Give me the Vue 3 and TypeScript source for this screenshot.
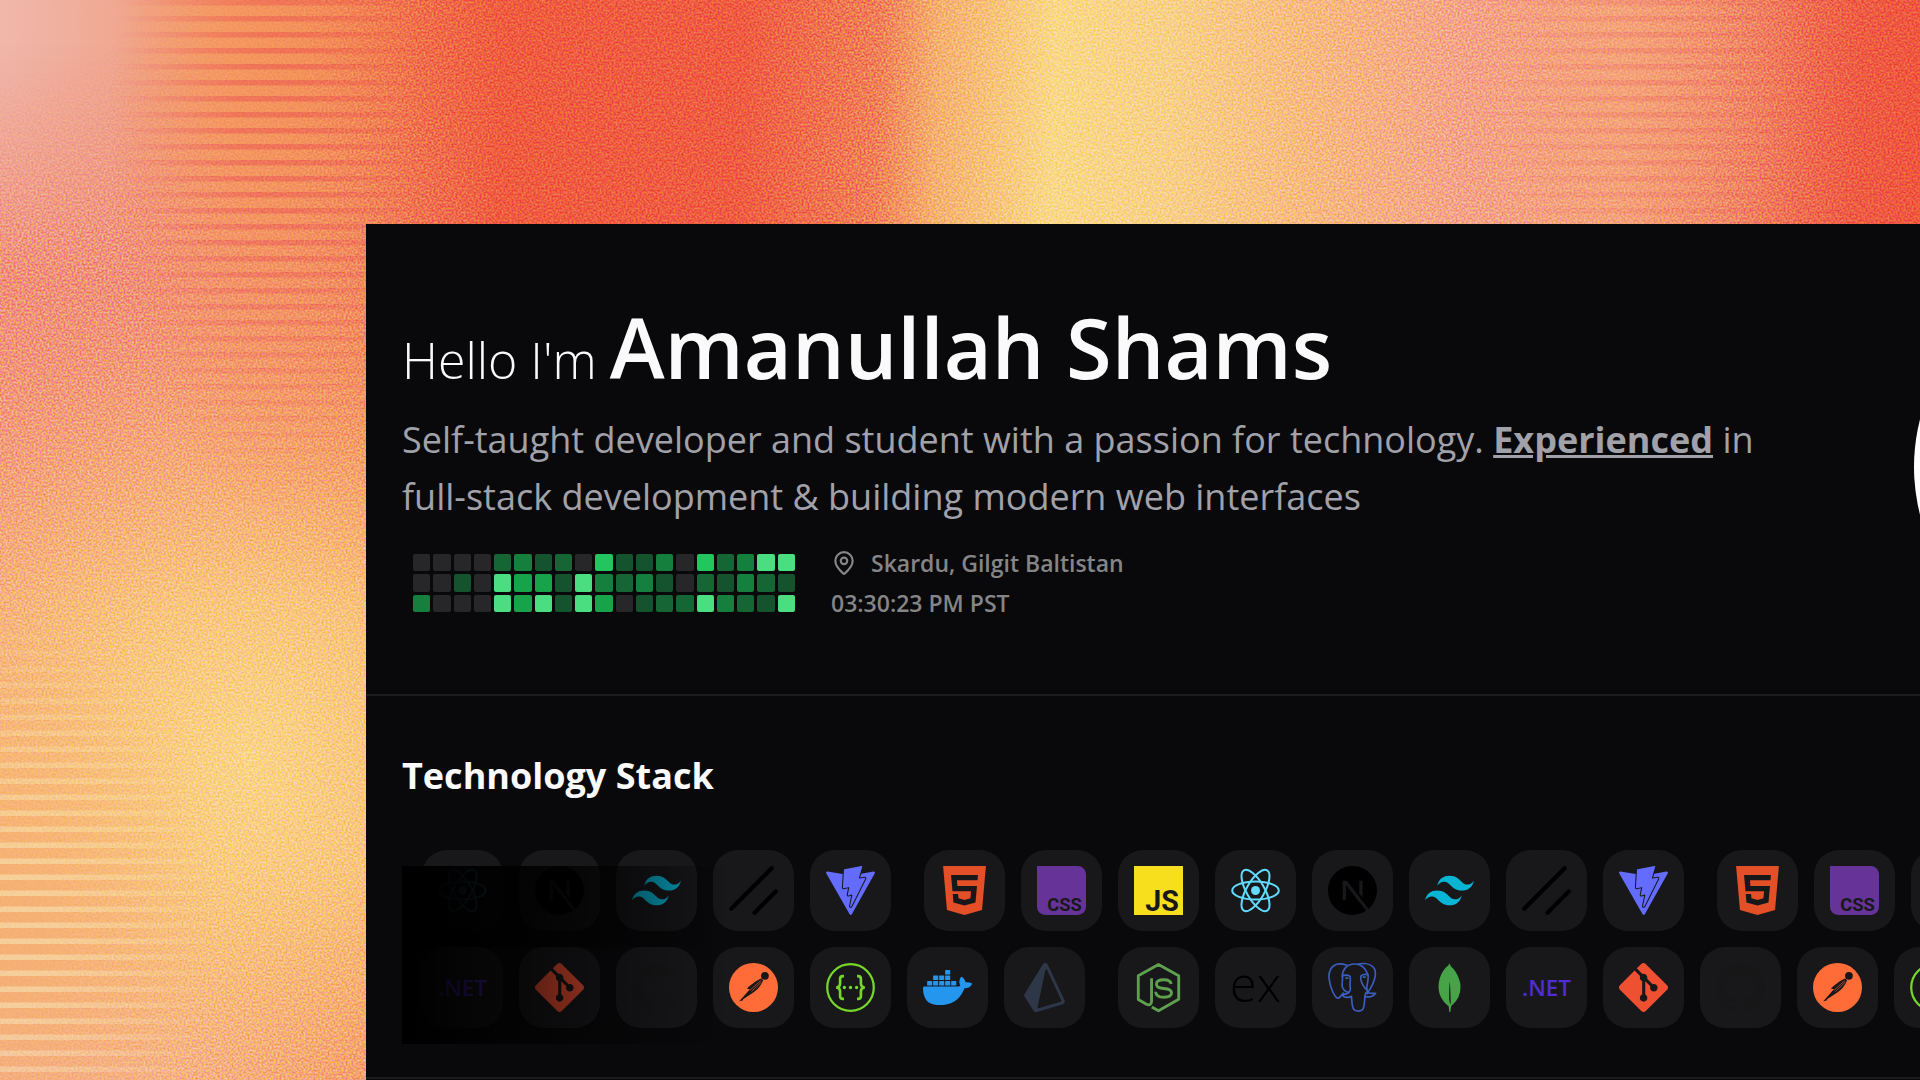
<script setup lang="ts">
type Level = 0 | 1 | 2 | 3 | 4 | 5 | 6

// One string per weekday, one digit per week
const activity: string[] = [
  '0000231205113052366',
  '0010644163231021321',
  '3000646164012263216',
]

const cells: Level[] = activity.flatMap((row) => [...row].map((d) => Number(d) as Level))

// Inner markup of each brand icon, drawn on a 24 by 24 grid
const icons: Record<string, string> = {
  html: `<path fill="#e34f26" d="M1.5 0h21l-1.91 21.563L11.977 24l-8.564-2.438L1.5 0zm7.031 9.75l-.232-2.718 10.059.003.23-2.622L5.412 4.41l.698 8.01h9.126l-.326 3.426-2.91.804-2.955-.81-.188-2.11H6.248l.33 4.171L12 19.351l5.379-1.443.744-8.157H8.531z"/>`,
  css: `<path fill="#663399" d="M0 0h20a4 4 0 0 1 4 4v16a4 4 0 0 1-4 4H4a4 4 0 0 1-4-4z"/>
    <text x="22" y="22" text-anchor="end" fill="#18181b" font-family="Roboto, sans-serif" font-weight="700" font-size="9">CSS</text>`,
  js: `<path fill="#f7df1e" d="M0 0h24v24H0z"/>
    <text x="22" y="22" text-anchor="end" fill="#18181b" font-family="Roboto, sans-serif" font-weight="700" font-size="14">JS</text>`,
  react: `<circle cx="12" cy="12" r="2.2" fill="#61dafb"/>
    <g fill="none" stroke="#61dafb" stroke-width="1">
      <ellipse cx="12" cy="12" rx="11.4" ry="4.4"/>
      <ellipse cx="12" cy="12" rx="11.4" ry="4.4" transform="rotate(60 12 12)"/>
      <ellipse cx="12" cy="12" rx="11.4" ry="4.4" transform="rotate(120 12 12)"/>
    </g>`,
  next: `<path fill="#000" d="M18.665 21.978C16.758 23.255 14.465 24 12 24 5.377 24 0 18.623 0 12S5.377 0 12 0s12 5.377 12 12c0 3.583-1.574 6.801-4.067 9.001L9.219 7.2H7.2v9.596h1.615V9.251l9.85 12.727Zm-3.332-8.533 1.6 2.061V7.2h-1.6v6.245Z"/>`,
  tailwind: `<path fill="#06b6d4" d="M12.001,4.8c-3.2,0-5.2,1.6-6,4.8c1.2-1.6,2.6-2.2,4.2-1.8c0.913,0.228,1.565,0.89,2.288,1.624C13.666,10.618,15.027,12,18.001,12c3.2,0,5.2-1.6,6-4.8c-1.2,1.6-2.6,2.2-4.2,1.8c-0.913-0.228-1.565-0.89-2.288-1.624C16.337,6.182,14.976,4.8,12.001,4.8z M6.001,12c-3.2,0-5.2,1.6-6,4.8c1.2-1.6,2.6-2.2,4.2-1.8c0.913,0.228,1.565,0.89,2.288,1.624c1.177,1.194,2.538,2.576,5.512,2.576c3.2,0,5.2-1.6,6-4.8c-1.2,1.6-2.6,2.2-4.2,1.8c-0.913-0.228-1.565-0.89-2.288-1.624C10.337,13.382,8.976,12,6.001,12z"/>`,
  shadcn: `<path fill="none" stroke="#000" stroke-width="2.1" stroke-linecap="round" d="M1.1 20.9 20.9 1.1M12.5 22.9 22.9 12.5"/>`,
  vite: `<path fill="#646cff" d="m8.286 10.578.512-8.657a.306.306 0 0 1 .247-.282L17.377.006a.306.306 0 0 1 .353.385l-1.558 5.403a.306.306 0 0 0 .352.385l2.388-.46a.306.306 0 0 1 .332.438l-6.79 13.55-.123.19a.294.294 0 0 1-.252.14c-.177 0-.35-.152-.305-.369l1.095-5.301a.306.306 0 0 0-.388-.355l-1.433.435a.306.306 0 0 1-.389-.354l.69-3.375a.306.306 0 0 0-.37-.36l-2.32.536a.306.306 0 0 1-.374-.316zm14.976-7.926L17.284 3.74l-.544 1.887 2.077-.4a.8.8 0 0 1 .84.369.8.8 0 0 1 .034.783L12.9 19.93l-.013.025-.015.023-.122.19a.801.801 0 0 1-.672.37.826.826 0 0 1-.634-.302.8.8 0 0 1-.16-.67l1.029-4.981-1.12.34a.81.81 0 0 1-.86-.262.802.802 0 0 1-.165-.67l.63-3.08-2.027.468a.808.808 0 0 1-.768-.233.81.81 0 0 1-.217-.6l.389-6.57-7.44-1.33a.612.612 0 0 0-.64.906L11.58 23.691a.612.612 0 0 0 1.066-.004l11.26-20.135a.612.612 0 0 0-.644-.9z"/>`,
  dotnet: `<text x="12" y="16" text-anchor="middle" fill="#512bd4" font-family="'Open Sans', sans-serif" font-weight="600" font-size="11">.NET</text>`,
  git: `<path fill="#f05032" d="M23.546 10.93L13.067.452c-.604-.603-1.582-.603-2.188 0L8.708 2.627l2.76 2.76c.645-.215 1.379-.07 1.889.441.516.515.658 1.258.438 1.9l2.658 2.66c.645-.223 1.387-.078 1.9.435.721.72.721 1.884 0 2.604-.719.719-1.881.719-2.6 0-.539-.541-.674-1.337-.404-1.996L12.86 8.955v6.525c.176.086.342.203.488.348.713.721.713 1.883 0 2.6-.719.721-1.889.721-2.609 0-.719-.719-.719-1.879 0-2.598.182-.18.387-.316.605-.406V8.835c-.217-.091-.424-.222-.6-.401-.545-.545-.676-1.342-.396-2.009L7.636 3.7.45 10.881c-.6.605-.6 1.584 0 2.189l10.48 10.477c.604.604 1.582.604 2.186 0l10.43-10.43c.605-.603.605-1.582 0-2.187"/>`,
  github: `<path fill="#181717" d="M12 .297c-6.63 0-12 5.373-12 12 0 5.303 3.438 9.8 8.205 11.385.6.113.82-.258.82-.577 0-.285-.01-1.04-.015-2.04-3.338.724-4.042-1.61-4.042-1.61C4.422 18.07 3.633 17.7 3.633 17.7c-1.087-.744.084-.729.084-.729 1.205.084 1.838 1.236 1.838 1.236 1.07 1.835 2.809 1.305 3.495.998.108-.776.417-1.305.76-1.605-2.665-.3-5.466-1.332-5.466-5.93 0-1.31.465-2.38 1.235-3.22-.135-.303-.54-1.523.105-3.176 0 0 1.005-.322 3.3 1.23.96-.267 1.98-.399 3-.405 1.02.006 2.04.138 3 .405 2.28-1.552 3.285-1.23 3.285-1.23.645 1.653.24 2.873.12 3.176.765.84 1.23 1.91 1.23 3.22 0 4.61-2.805 5.625-5.475 5.92.42.36.81 1.096.81 2.22 0 1.606-.015 2.896-.015 3.286 0 .315.21.69.825.57C20.565 22.092 24 17.592 24 12.297c0-6.627-5.373-12-12-12"/>`,
  postman: `<circle cx="12" cy="12" r="12" fill="#ff6c37"/>
    <circle cx="17.6" cy="6.3" r="1.9" fill="#18181b"/>
    <path fill="#18181b" d="M15.9 7.6c-2.2.6-5 3-7.2 4.9l1.5.3-1.9 2.3-3.3 3.6 1.7-.3.2-.7 5-3.2c2.3-1.6 4-3.7 4.8-6z"/>
    <path fill="none" stroke="#ff6c37" stroke-width=".3" d="M15.6 8.600 10.2 13.4M15.9 9.3 11 14"/>`,
  swagger: `<circle cx="12" cy="12" r="11.4" fill="none" stroke="#77d728" stroke-width="1.1"/>
    <path fill="none" stroke="#77d728" stroke-width="1.3" d="M8.800 6.4H8.3c-1 0-1.4.5-1.4 1.4v2.4c0 1.1-.5 1.7-1.9 1.8c1.4.1 1.9.7 1.9 1.8v2.4c0 .9.4 1.4 1.4 1.4h.5M15.2 6.4h.5c1 0 1.4.5 1.4 1.4v2.4c0 1.1.5 1.7 1.9 1.8c-1.4.1-1.9.7-1.9 1.8v2.4c0 .9-.4 1.4-1.4 1.4h-.5"/>
    <g fill="#77d728"><circle cx="9" cy="12" r=".8"/><circle cx="12" cy="12" r=".8"/><circle cx="15" cy="12" r=".8"/></g>`,
  docker: `<path fill="#2496ed" d="M13.983 11.078h2.119a.186.186 0 00.186-.185V9.006a.186.186 0 00-.186-.186h-2.119a.185.185 0 00-.185.185v1.888c0 .102.083.185.185.185m-2.954-5.430h2.118a.186.186 0 00.186-.186V3.574a.186.186 0 00-.186-.185h-2.118a.185.185 0 00-.185.185v1.888c0 .102.082.185.185.185m0 2.716h2.118a.187.187 0 00.186-.186V6.290a.186.186 0 00-.186-.185h-2.118a.185.185 0 00-.185.185v1.887c0 .102.082.185.185.186m-2.930 0h2.120a.186.186 0 00.184-.186V6.290a.185.185 0 00-.185-.185H8.100a.185.185 0 00-.185.185v1.887c0 .102.083.185.185.186m-2.964 0h2.119a.186.186 0 00.185-.186V6.290a.185.185 0 00-.185-.185H5.136a.186.186 0 00-.186.185v1.887c0 .102.084.185.186.186m5.893 2.715h2.118a.186.186 0 00.186-.185V9.006a.186.186 0 00-.186-.186h-2.118a.185.185 0 00-.185.185v1.888c0 .102.082.185.185.185m-2.930 0h2.120a.185.185 0 00.184-.185V9.006a.185.185 0 00-.184-.186h-2.120a.185.185 0 00-.184.185v1.888c0 .102.083.185.185.185m-2.964 0h2.119a.185.185 0 00.185-.185V9.006a.185.185 0 00-.184-.186h-2.120a.186.186 0 00-.186.186v1.887c0 .102.084.185.186.185m-2.920 0h2.120a.185.185 0 00.184-.185V9.006a.185.185 0 00-.184-.186h-2.120a.185.185 0 00-.184.185v1.888c0 .102.082.185.185.185M23.763 9.890c-.065-.051-.672-.510-1.954-.510-.338.001-.676.030-1.010.087-.248-1.700-1.653-2.530-1.716-2.566l-.344-.199-.226.327c-.284.438-.490.922-.612 1.430-.230.970-.090 1.882.403 2.661-.595.332-1.550.413-1.744.420H.751a.751.751 0 00-.750.748 11.376 11.376 0 00.692 4.062c.545 1.428 1.355 2.480 2.410 3.124 1.180.723 3.100 1.137 5.275 1.137.983.003 1.963-.086 2.930-.266a12.248 12.248 0 003.823-1.389c.980-.567 1.860-1.288 2.610-2.136 1.252-1.418 1.998-2.997 2.553-4.400h.221c1.372 0 2.215-.549 2.680-1.009.309-.293.550-.650.707-1.046l.098-.288Z"/>`,
  prisma: `<path fill="#2d3748" d="M21.8068 18.2848L13.5528.7565c-.207-.4382-.639-.7273-1.1286-.7541-.5023-.0293-.9523.213-1.2062.6253L2.266 15.1271c-.2773.4518-.2718 1.0091.0158 1.4555l4.3759 6.7786c.2608.4046.7127.6388 1.1823.6388.1332 0 .267-.0188.3987-.0577l12.7019-3.7568c.3891-.1151.7072-.3904.8737-.7553s.1633-.7828-.0075-1.1454zm-1.8481.7519L9.1814 22.2242c-.3292.0975-.6448-.1873-.5756-.5194l3.8501-18.4386c.072-.3448.5486-.3996.699-.0803l7.1288 15.138c.1344.2856-.019.6224-.325.7128z"/>`,
  node: `<g fill="none" stroke="#5fa04e" stroke-width="1.4" stroke-linejoin="round">
      <path d="M8.600 7.500v11.2c0 1.6-1.2 2.2-2.5 1.5L2.1 17.9V6.2L12 .7l9.9 5.5v11.6L12 23.4l-3.3-1.9"/>
      <path d="M18.2 10.3c-.2-1.5-1.4-2.1-3.6-2.1s-3.6.7-3.6 2.1c0 1.7 1.4 1.9 3.7 2.2c2.4.3 3.7.6 3.7 2.1s-1.3 2.2-3.8 2.2c-2.7 0-3.9-.9-4-2.7"/>
    </g>`,
  express: `<text x="12" y="19" text-anchor="middle" fill="#000" font-family="'Open Sans', sans-serif" font-weight="300" font-size="24">ex</text>`,
  postgres: `<g fill="none" stroke="#3b5fc0" stroke-width=".8" stroke-linejoin="round" stroke-linecap="round">
      <path d="M9 1C6.5.2 4.5.2 3 1.2C.8 2.7.2 5 .6 8c.5 3.5 1.6 6.6 3.2 8.6c.7.8 1.4.8 2 .1l1.7-2"/>
      <path d="M7 6.5C7 3.5 9 .5 13 .5c3.5 0 5.5 2.4 6.5 5c.6 1.8-.3 4.5-.5 6.3c-.1 1.3.7 2 .3 3.2"/>
      <path d="M14.5.6C18-.1 21.5.5 22.8 3c1.2 2.6-.4 7.5-3.3 11.3"/>
      <path d="M7 6.5c1-.8 2.8-.7 3.7-.1c.7 2-.3 3.6.2 5.5c.2 1.3 0 2-.7 2.5c-1.7-.1-3.3-1.7-3.3-3.4c0-1.7.4-2.8.1-4.5z"/>
      <path d="M10.2 14.4c-.9 1-2.4.7-3.2 1.4c1 1.4 3.3 1.2 4.5.5c.2 2.5.2 4.3.8 5.9c.6 1.5 3.3 1.8 4.6.6c1.1-1 .9-4.4 1.3-7.3c.3-1 .7-1.5 1.3-1.1c1.3.6 2.5.6 3.8.4c-.9 1.5-3.2 2.2-4.9 1.6"/>
      <path d="M19.3 5.8c-1-.5-2.6-.2-3.2.7c-.4 2.2 1 4.6 2.6 6.5M8.800 7.4h.9M17.3 6.9h.9"/>
    </g>`,
  mongo: `<path fill="#47a248" d="M17.193 9.555c-1.264-5.580-4.252-7.414-4.573-8.115-.280-.394-.530-.954-.735-1.440-.036.495-.055.685-.523 1.184-.723.566-4.438 3.682-4.740 10.020-.282 5.912 4.270 9.435 4.888 9.884l.070.050A73.490 73.490 0 0111.910 24h.481c.114-1.032.284-2.056.510-3.070.417-.296.604-.463.850-.693a11.342 11.342 0 003.639-8.464c.010-.814-.103-1.662-.197-2.218zm-5.336 8.195s0-8.291.275-8.290c.213 0 .490 10.695.490 10.695-.381-.045-.765-1.760-.765-2.405z"/>`,
}

const frontend = ['html', 'css', 'js', 'react', 'next', 'tailwind', 'shadcn', 'vite']
const backend = ['node', 'express', 'postgres', 'mongo', 'dotnet', 'git', 'github', 'postman', 'swagger', 'docker', 'prisma']

const rails: string[][][] = [
  [frontend.slice(3), frontend, frontend],
  [backend.slice(4), backend],
]
</script>

<template>
  <div class="page">
    <div class="backdrop" aria-hidden="true">
      <div class="glow-side"></div>
      <div class="glow-sun"></div>
      <svg class="grain" width="100%" height="100%">
        <filter id="grain-filter" x="0" y="0" width="100%" height="100%" color-interpolation-filters="sRGB">
          <feTurbulence type="fractalNoise" baseFrequency="0.5" numOctaves="2" seed="4" />
          <feColorMatrix type="matrix" values="2 0 0 0 -0.5  0 2.6 0 0 -0.8  0 0 2.6 0 -0.8  0 0 0 0 1" />
        </filter>
        <rect width="100%" height="100%" filter="url(#grain-filter)" />
      </svg>
      <div class="stripes stripes-top"></div>
      <div class="stripes stripes-right"></div>
      <div class="stripes stripes-bottom"></div>
    </div>

    <main class="panel">
      <header class="intro">
        <div class="about">
          <h1 class="title"><span class="hello">Hello I'm </span><span class="name">Amanullah Shams</span></h1>
          <p class="lead">
            Self-taught developer and student with a passion for technology.
            <a class="link" href="#experience">Experienced</a> in full-stack development &amp; building modern web interfaces
          </p>
          <div class="meta">
            <div class="graph">
              <span v-for="(level, i) in cells" :key="i" class="cell" :class="`level-${level}`"></span>
            </div>
            <div class="where">
              <span class="place">
                <svg class="pin" viewBox="0 0 24 24" fill="none" stroke="currentColor" stroke-width="2" stroke-linecap="round" stroke-linejoin="round" aria-hidden="true">
                  <path d="M20 10c0 4.990-5.540 10.190-7.400 11.800a1 1 0 0 1-1.200 0C9.540 20.190 4 14.990 4 10a8 8 0 0 1 16 0z" />
                  <circle cx="12" cy="10" r="3" />
                </svg>
                Skardu, Gilgit Baltistan
              </span>
              <time class="clock">03:30:23 PM PST</time>
            </div>
          </div>
        </div>
        <div class="avatar"></div>
      </header>

      <section class="stack">
        <h2 class="heading">Technology Stack</h2>
        <div class="rails">
          <div v-for="(rail, r) in rails" :key="r" class="rail">
            <ul v-for="(group, g) in rail" :key="g" class="group">
              <li v-for="icon in group" :key="icon" class="tile">
                <svg class="icon" viewBox="0 0 24 24" v-html="icons[icon]"></svg>
              </li>
            </ul>
          </div>
          <div class="fade fade-all"></div>
          <div class="fade fade-first"></div>
        </div>
      </section>
    </main>
  </div>
</template>

<style>
body {
  margin: 0;
  background: #f4a070;
}
</style>

<style scoped>
.page {
  position: relative;
  display: flex;
  box-sizing: border-box;
  min-height: 100vh;
  padding: 224px 0 0 366px;
  overflow: hidden;
  font-family: 'Open Sans', 'Noto Sans', sans-serif;
}

.backdrop {
  position: absolute;
  inset: 0;
  overflow: hidden;
  background: linear-gradient(
    92deg,
    #f0b8ab 0%,
    #f0a892 6%,
    #f3996c 11%,
    #f07850 19%,
    #ef5c40 26%,
    #ef5c42 38%,
    #f08058 45%,
    #f5b070 48%,
    #f9d888 54%,
    #f8d088 60%,
    #f7ba80 67%,
    #f4a388 75%,
    #f4a07c 83%,
    #ef8062 89%,
    #ee5c44 95%,
    #f0543c 100%
  );
}

.glow-side,
.glow-sun,
.grain,
.stripes {
  position: absolute;
  inset: 0;
}

.glow-side {
  width: 500px;
  background: linear-gradient(to bottom, #f0a89000 4%, #f0907a 26%, #f39c7c 42%, #f5a87a 58%, #f8b474 76%, #f4ae92 98%);
  mask-image: linear-gradient(to right, #000 30%, transparent);
}

.glow-sun {
  width: 500px;
  background:
    radial-gradient(ellipse 360px 460px at 250px 760px, #fad488 0%, #f9d084c0 40%, #f8cc8000 100%),
    linear-gradient(to right, #f5a06800, #f5a068 70%);
  mask-image: linear-gradient(to bottom, transparent 22%, #000 56%, #000 80%, #0009);
}

.grain {
  mix-blend-mode: overlay;
  opacity: 0.35;
  mask-image: radial-gradient(ellipse at 0 0, transparent 4%, #000 16%);
}

.stripes-top {
  background: repeating-linear-gradient(to bottom, #ef6450 0 5px, #f69a5a 6px 16px);
  opacity: 0.6;
  mask-image: radial-gradient(ellipse 160px 400px at 270px 120px, #000 20%, transparent 100%);
}

.stripes-right {
  background: repeating-linear-gradient(to bottom, #f0806a 0 5px, #f6a878 6px 16px);
  opacity: 0.5;
  mask-image: radial-gradient(ellipse 180px 320px at 1640px 80px, #000 0%, transparent 100%);
}

.stripes-bottom {
  background: repeating-linear-gradient(to bottom, #f6ae72 0 10px, #f6d4a0 11px 16px);
  opacity: 0.8;
  mask-image: radial-gradient(ellipse 220px 340px at 0 940px, #000 20%, transparent 100%);
}

.panel {
  position: relative;
  flex: 1;
  min-width: 0;
  margin-right: -414px;
  background: #09090b;
  color: #fafafa;
}

.intro {
  display: flex;
  gap: 24px;
  align-items: center;
  padding: 75px 36px 71px;
  border-bottom: 2px solid #1c1c1f;
}

.about {
  flex: 1;
  min-width: 0;
}

.title {
  margin: 0;
  font-size: 83px;
  font-weight: 600;
  line-height: 96px;
}

.hello {
  font-size: 50px;
  font-weight: 300;
  line-height: 50px;
}

.lead {
  margin: 16px 0 0;
  padding-right: 72px;
  color: #a1a1aa;
  font-size: 36px;
  line-height: 57px;
}

.link {
  color: inherit;
  font-weight: 700;
  text-decoration: underline;
}

.meta {
  display: flex;
  gap: 36px;
  align-items: center;
  margin-top: 18px;
  padding-left: 11px;
}

.graph {
  display: grid;
  grid-template-columns: repeat(19, 1fr);
  grid-template-rows: repeat(3, 1fr);
  gap: 3px;
  width: 382px;
  height: 58px;
}

.cell {
  border-radius: 2px;
}

.level-0 { background: #27272a; }
.level-1 { background: #14532d; }
.level-2 { background: #166534; }
.level-3 { background: #15803d; }
.level-4 { background: #16a34a; }
.level-5 { background: #22c55e; }
.level-6 { background: #4ade80; }

.where {
  display: flex;
  flex-direction: column;
  color: #858585;
  font-size: 23px;
  font-weight: 600;
  line-height: 40px;
}

.place {
  display: flex;
  gap: 14px;
  align-items: center;
}

.pin {
  width: 26px;
  height: 26px;
}

.avatar {
  flex: none;
  width: 384px;
  aspect-ratio: 1;
  margin: -30px 0 -42px;
  border-radius: 50%;
  background: #fff;
}

.stack {
  padding: 52px 36px 49px;
  border-bottom: 2px solid #1c1c1f;
}

.heading {
  margin: 0 0 46px;
  font-size: 36px;
  font-weight: 700;
  line-height: 56px;
}

.rails {
  position: relative;
  display: flex;
  flex-direction: column;
  gap: 16px;
}

.rail {
  display: flex;
  gap: 33px;
  padding-left: 20px;
  overflow: hidden;
}

.group {
  display: flex;
  flex: none;
  gap: 16px;
  margin: 0;
  padding: 0;
  list-style: none;
}

.tile {
  display: flex;
  padding: 16px;
  border-radius: 25px;
  background: #18181b;
}

.icon {
  width: 49px;
  height: 49px;
  overflow: visible;
}

.fade {
  position: absolute;
  top: 16px;
  left: 0;
  width: 330px;
  background: linear-gradient(to right, #000, transparent);
}

.fade-all {
  bottom: -16px;
}

.fade-first {
  height: 81px;
}
</style>
